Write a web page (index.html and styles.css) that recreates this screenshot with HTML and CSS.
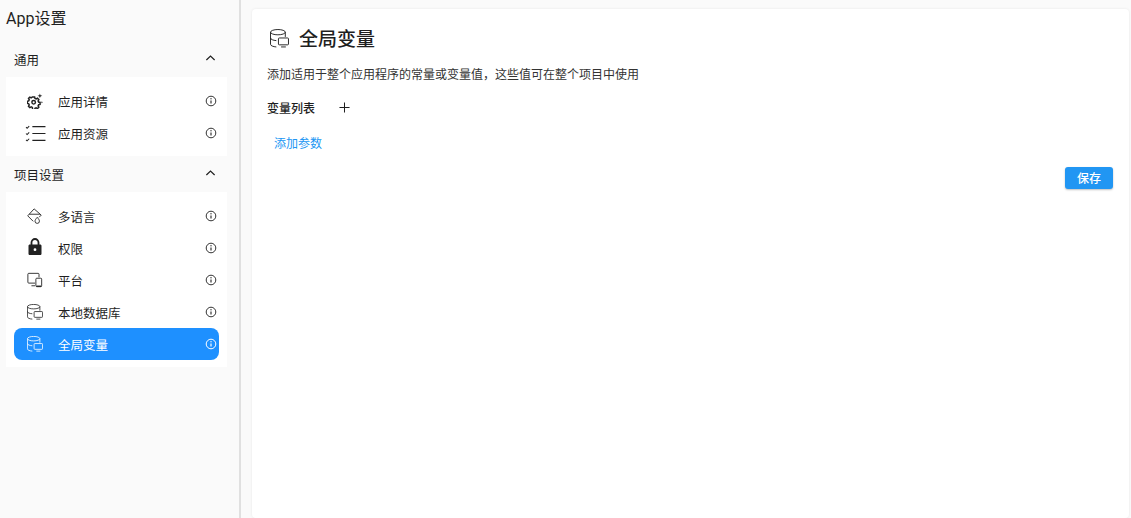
FILE: index.html
```html
<!DOCTYPE html>
<html lang="zh-CN">
<head>
    <meta charset="UTF-8">
    <title>App设置</title>
    <link rel="stylesheet" href="styles.css">
</head>
<body>
    <div class="container">
        <div class="sidebar">
            <div class="sidebar-title">App设置</div>

            <div class="group-header">
                <span>通用</span>
                <svg class="chevron" viewBox="0 0 12 8"><path d="M1.500 6.200 6 1.800l4.500 4.400"/></svg>
            </div>
            <div class="group">
                <div class="item">
                    <svg class="item-icon" viewBox="0 0 18 18">
                        <circle cx="7.500" cy="10.500" r="2" stroke-width="1.600"/>
                        <path stroke-width="1.700" d="M6.400 4.500h2.200l.4 1.600 1.300.6 1.500-.8 1.500 1.500-.8 1.500.6 1.300 1.600.4v2.200l-1.600.4-.6 1.300.8 1.500-1.500 1.500-1.500-.8-1.300.6-.4 1.600H6.400L6 16.200l-1.300-.6-1.500.8-1.500-1.500.8-1.500-.6-1.300L.3 11.500V9.300l1.600-.4.6-1.300-.8-1.500 1.500-1.500 1.500.8L6 4.500z"/>
                        <path class="solid" d="M14.500 .5l.7 2 2 .7-2 .7-.7 2-.7-2-2-.7 2-.7zM16.800 9l.4 1 1 .4-1 .4-.4 1-.4-1-1-.4 1-.4z"/>
                    </svg>
                    <span class="item-label">应用详情</span>
                    <svg class="info" viewBox="0 0 12 12"><use href="#info-icon"/></svg>
                </div>
                <div class="item">
                    <svg class="item-icon wide" viewBox="0 0 20 16">
                        <path d="M1 2l1 1 2-2M1 8l1 1 2-2M1 14l1 1 2-2" stroke-width="1"/>
                        <path d="M7 1.500h12.500M7 8h12.500M7 14.500h12.500" stroke-width="1.100"/>
                    </svg>
                    <span class="item-label">应用资源</span>
                    <svg class="info" viewBox="0 0 12 12"><use href="#info-icon"/></svg>
                </div>
            </div>

            <div class="group-header">
                <span>项目设置</span>
                <svg class="chevron" viewBox="0 0 12 8"><path d="M1.500 6.200 6 1.800l4.500 4.400"/></svg>
            </div>
            <div class="group">
                <div class="item">
                    <svg class="item-icon" viewBox="0 0 18 18">
                        <path d="M8 1 .8 8.800l6.200 6.200M8 1l8 7-2.500 2.500M2.500 7h12"/>
                        <path d="M11.500 10.500c-1.500 1.800-2.500 3-2.500 4.300a2.500 2.500 0 0 0 5 0c0-1.300-1-2.500-2.500-4.300z"/>
                    </svg>
                    <span class="item-label">多语言</span>
                    <svg class="info" viewBox="0 0 12 12"><use href="#info-icon"/></svg>
                </div>
                <div class="item">
                    <svg class="item-icon lock" viewBox="0 0 18 18">
                        <path d="M5.500 7V4.500a3.500 3.500 0 0 1 7 0V7" stroke-width="1.800"/>
                        <path class="solid" fill-rule="evenodd" d="M3.800 6.500h10.400c.7 0 1.300.6 1.300 1.300v7.900c0 .7-.6 1.300-1.300 1.300H3.800c-.7 0-1.300-.6-1.300-1.300V7.800c0-.7.6-1.300 1.300-1.300zM9 10.300a1.400 1.400 0 1 0 0 2.800 1.400 1.400 0 0 0 0-2.800z"/>
                    </svg>
                    <span class="item-label">权限</span>
                    <svg class="info" viewBox="0 0 12 12"><use href="#info-icon"/></svg>
                </div>
                <div class="item">
                    <svg class="item-icon" viewBox="0 0 18 18">
                        <path d="M9 12.500H2a1 1 0 0 1-1-1v-9a1 1 0 0 1 1-1h10.500a1 1 0 0 1 1 1V6M5 15.500h4"/>
                        <rect x="10" y="7" width="6.500" height="9.500" rx="1"/>
                        <path d="M10.500 16h5.500" stroke-width="1.500"/>
                    </svg>
                    <span class="item-label">平台</span>
                    <svg class="info" viewBox="0 0 12 12"><use href="#info-icon"/></svg>
                </div>
                <div class="item">
                    <svg class="item-icon" viewBox="0 0 18 18"><use href="#db-icon"/></svg>
                    <span class="item-label">本地数据库</span>
                    <svg class="info" viewBox="0 0 12 12"><use href="#info-icon"/></svg>
                </div>
                <div class="item active">
                    <svg class="item-icon" viewBox="0 0 18 18"><use href="#db-icon"/></svg>
                    <span class="item-label">全局变量</span>
                    <svg class="info" viewBox="0 0 12 12"><use href="#info-icon"/></svg>
                </div>
            </div>
        </div>

        <div class="divider"></div>

        <div class="main">
            <div class="card">
                <div class="card-header">
                    <svg class="card-icon" viewBox="0 0 18 18"><use href="#db-icon"/></svg>
                    <h1>全局变量</h1>
                </div>
                <div class="description">添加适用于整个应用程序的常量或变量值，这些值可在整个项目中使用</div>
                <div class="list-header">
                    <span>变量列表</span>
                    <svg class="plus" viewBox="0 0 12 12"><path d="M6 .5v11M.5 6h11"/></svg>
                </div>
                <div class="add-param">添加参数</div>
                <div class="actions">
                    <button class="button">保存</button>
                </div>
            </div>
        </div>
    </div>

    <!-- shared icons -->
    <svg class="icon-defs">
        <symbol id="info-icon" viewBox="0 0 12 12">
            <circle cx="6" cy="6" r="4.800" fill="none" stroke="currentColor" stroke-width="1"/>
            <path d="M6 5.400v3" fill="none" stroke="currentColor" stroke-width="1.200"/>
            <circle cx="6" cy="3.700" r=".7" fill="currentColor"/>
        </symbol>
        <symbol id="db-icon" viewBox="0 0 18 18">
            <g fill="none" stroke="currentColor" stroke-width=".9">
                <ellipse cx="7.500" cy="3" rx="7" ry="2.500"/>
                <path d="M.5 3v11.500c0 1.300 2.500 2.300 5.500 2.500M14.500 3v4.500M.5 8.500c0 1.300 2.500 2.300 5.500 2.500"/>
                <rect x="8" y="8.500" width="9.500" height="6.500" rx=".8"/>
                <path d="M10.500 17h4.500"/>
            </g>
        </symbol>
    </svg>
</body>
</html>
```

FILE: styles.css
```css
:root {
    --accent: #1e90ff;
    --page-background: #fafafa;
    --text: #1f1f1f;
}

body {
    margin: 0;
    padding: 0;
    font-family: Roboto, 'Noto Sans CJK SC', sans-serif;
    background-color: var(--page-background);
    color: var(--text);
    overflow: hidden;
}

.container {
    display: flex;
    height: 100vh;
}

.icon-defs {
    display: none;
}

/* Sidebar */
.sidebar {
    width: 239px;
    flex-shrink: 0;
    box-sizing: border-box;
    padding: 0 12px 0 6px;
}

.sidebar-title {
    font-size: 16px;
    line-height: 20px;
    padding-top: 9px;
    height: 33px;
}

.group-header {
    display: flex;
    align-items: center;
    justify-content: space-between;
    height: 35px;
    padding: 0 11px 0 8px;
    font-size: 12.500px;
}

.chevron {
    width: 11px;
    height: 8px;
    margin-top: -4px;
    fill: none;
    stroke: var(--text);
    stroke-width: 1.300;
}

.group {
    background-color: #fff;
    padding: 8px 8px 7px;
    margin-bottom: 1px;
}

.item {
    display: flex;
    align-items: center;
    height: 32px;
    padding: 0 2px 0 13px;
    border-radius: 8px;
    font-size: 12.500px;
    box-sizing: border-box;
}

.item-icon {
    width: 16px;
    height: 16px;
    flex-shrink: 0;
    fill: none;
    stroke: currentColor;
    stroke-width: 1;
    color: #222;
}

.item-icon .solid {
    fill: currentColor;
    stroke: none;
}

.item-icon.wide {
    width: 21px;
    height: 17px;
    margin-left: -2px;
    margin-right: -3px;
}

.item-icon.lock {
    width: 18px;
    height: 18px;
    margin: -2px -1px 0;
}

.item-label {
    flex: 1;
    margin-left: 15px;
}

.info {
    width: 12px;
    height: 12px;
    flex-shrink: 0;
    color: #333;
}

.item.active {
    background-color: var(--accent);
    color: #fff;
}

.item.active .item-icon,
.item.active .info {
    color: #fff;
}

.divider {
    width: 2px;
    flex-shrink: 0;
    background-color: #e0e0e0;
}

/* Main card */
.main {
    flex: 1;
    padding: 9px 2px 0 11px;
    min-width: 0;
}

.card {
    height: 100%;
    box-sizing: border-box;
    background-color: #fff;
    border-radius: 4px;
    padding: 17px 16px 0 16px;
    box-shadow: 0 0 3px rgba(0, 0, 0, 0.08);
}

.card-header {
    display: flex;
    align-items: center;
    gap: 10px;
    padding-left: 2px;
    height: 28px;
}

.card-icon {
    width: 19px;
    height: 19px;
    margin-top: -3px;
    color: #222;
}

.card-header h1 {
    margin: 0;
    font-size: 19px;
    font-weight: 500;
    line-height: 28px;
}

.description {
    font-size: 12px;
    line-height: 16px;
    margin-top: 13px;
    margin-left: -1px;
    color: #333;
}

.list-header {
    display: flex;
    align-items: center;
    gap: 24px;
    height: 18px;
    margin-top: 15px;
    margin-left: -1px;
    font-size: 12px;
    font-weight: 500;
}

.plus {
    width: 11px;
    height: 11px;
    fill: none;
    stroke: var(--text);
    stroke-width: 1.100;
}

.add-param {
    margin-top: 19px;
    padding-left: 6px;
    font-size: 12px;
    line-height: 18px;
    color: #2196f3;
}

.actions {
    display: flex;
    justify-content: flex-end;
    margin-top: 14px;
}

.button {
    width: 48px;
    height: 22px;
    padding: 0 0 2px;
    border: none;
    border-radius: 3px;
    background-color: #2196f3;
    color: #fff;
    font-family: inherit;
    font-size: 12px;
    font-weight: 500;
    box-shadow: 0 1px 2px rgba(0, 0, 0, 0.25);
}
```
